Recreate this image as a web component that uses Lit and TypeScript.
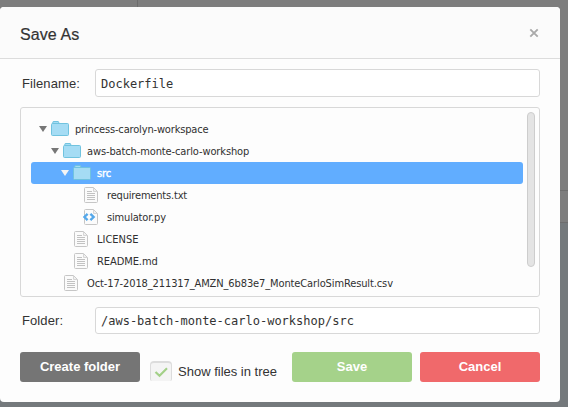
import { LitElement, html, css, svg } from "lit";
import { customElement, property } from "lit/decorators.js";

type Kind = "folder" | "text" | "code";
interface Node {
  name: string;
  kind: Kind;
  indent: number;
  spacing: number;
  selected?: boolean;
}

const NODES: Node[] = [
  { name: "princess-carolyn-workspace", kind: "folder", indent: 8, spacing: -0.16 },
  { name: "aws-batch-monte-carlo-workshop", kind: "folder", indent: 20, spacing: -0.12 },
  { name: "src", kind: "folder", indent: 30, spacing: -0.1, selected: true },
  { name: "requirements.txt", kind: "text", indent: 52, spacing: -0.18 },
  { name: "simulator.py", kind: "code", indent: 52, spacing: -0.17 },
  { name: "LICENSE", kind: "text", indent: 42, spacing: 0 },
  { name: "README.md", kind: "text", indent: 42, spacing: -0.08 },
  { name: "Oct-17-2018_211317_AMZN_6b83e7_MonteCarloSimResult.csv", kind: "text", indent: 32, spacing: -0.115 },
];

const folderIcon = html`<svg width="18" height="15" viewBox="0 0 18 15">
  <path d="M.5 13.5V3.5Q.5 2.5 1.5 2.5L2.2.5H7.3L8.2 2.5H16.5Q17.5 2.5 17.5 3.5V13.5Q17.5 14.5 16.5 14.5H1.5Q.5 14.5.5 13.5Z" fill="#a5dcf4" stroke="#70c3df"/>
  <path d="M1.5 2.5H8.5" stroke="#70c3df"/>
</svg>`;

const fileIcon = (code: boolean) => html`<svg width="18" height="16" viewBox="0 0 18 16">
  <path d="M2.5.5H10.5L14.5 4.5V14.5Q14.5 15.5 13.5 15.5H2.5Q1.5 15.5 1.5 14.5V1.5Q1.5.5 2.5.5Z" fill="#fbfbfb" stroke="#c6c6c6"/>
  <path d="M10.5 1V4.5H14" fill="#f0f0f0" stroke="#d6d6d6"/>
  ${code
    ? svg`<path d="M4.6 4.9L1.4 8L4.6 11.1M7.4 4.9L10.6 8L7.4 11.1" fill="none" stroke="#55a8ea" stroke-width="2.4"/>`
    : svg`<path d="M4 4.5H9M4 6.5H12M4 8.5H12M4 10.5H12M4 12.5H12" stroke="#c2c2c2" fill="none"/>`}
</svg>`;

@customElement("tree-row")
class TreeRow extends LitElement {
  @property({ attribute: false }) node!: Node;

  static styles = css`
    :host { display: block; }
    .row {
      box-sizing: border-box;
      height: 22px;
      display: flex;
      align-items: center;
      border-radius: 3px;
      color: #303030;
      font: 11px/22px "DejaVu Sans Condensed", "DejaVu Sans", sans-serif;
      font-stretch: condensed;
      white-space: nowrap;
    }
    .selected { background: #61adff; color: #fff; -webkit-text-stroke: 0.4px #fff; }
    .arrow { width: 8px; height: 6px; margin-right: 4px; fill: #777; }
    .selected .arrow { fill: #f4f4f4; }
    .icon { display: flex; width: 18px; flex: none; margin-right: 6px; }
    .folder { padding-bottom: 1px; }
    .label { padding-top: 1px; }
  `;

  render() {
    const n = this.node;
    const folder = n.kind === "folder";
    return html`<div class="row ${n.selected ? "selected" : ""}" style="padding-left:${n.indent}px">
      ${folder ? html`<svg class="arrow" viewBox="0 0 8 6"><path d="M0 0H8L4 6Z"/></svg>` : ""}
      <span class="icon ${folder ? "folder" : ""}">${folder ? folderIcon : fileIcon(n.kind === "code")}</span>
      <span class="label" style="letter-spacing:${n.spacing}px">${n.name}</span>
    </div>`;
  }
}

@customElement("app-root")
class AppRoot extends LitElement {
  static styles = css`
    :host {
      display: block;
      position: relative;
      width: 568px;
      height: 407px;
      overflow: hidden;
      background: linear-gradient(#7d7d7d 222px, #74797c 222px);
      font-family: "Liberation Sans", sans-serif;
      color: #333;
    }
    * { box-sizing: border-box; }
    .tick { position: absolute; left: 137px; top: 0; width: 1px; height: 7px; background: #6c6c6c; }
    .rule { position: absolute; right: 0; width: 8px; height: 1px; top: 190px; background: #6d6d6d; }
    .low { top: 222px; }
    .dialog {
      position: relative;
      top: 7px;
      width: 560px;
      height: 395px;
      border-radius: 4px;
      background: #fdfdfd;
      overflow: hidden;
    }
    .header {
      height: 52px;
      padding: 0 20px;
      display: flex;
      align-items: center;
      justify-content: space-between;
      border-bottom: 1px solid #dcdcdc;
      background: #fbfbfb;
    }
    .title { margin: 0; padding-top: 4px; font: 16px/20px "Liberation Sans", sans-serif; letter-spacing: 0.1px; -webkit-text-stroke: 0.2px #333; }
    .close { width: 10px; height: 10px; margin: 1px 1px 0 0; }
    .body { padding: 10px 20px 0; }
    .field { display: flex; align-items: center; height: 28px; }
    .field.folder { height: 27px; }
    .field label { width: 75px; padding-left: 2px; font-size: 13px; letter-spacing: 0.1px; }
    .input {
      flex: 1;
      height: 100%;
      padding: 1px 5px 0;
      display: flex;
      align-items: center;
      border: 1px solid #d8d8d8;
      border-radius: 3px;
      background: #fff;
      font: 12px "DejaVu Sans Mono", monospace;
    }
    .tree {
      display: flex;
      justify-content: space-between;
      height: 190px;
      margin: 10px 0;
      padding: 4px 4px 0 10px;
      border: 1px solid #d8d8d8;
      border-radius: 3px;
    }
    .rows { width: 492px; padding-top: 6px; }
    .thumb { width: 8px; height: 155px; border: 1px solid #cdcdcd; border-radius: 4px; background: #e4e4e4; }
    .actions { display: flex; align-items: flex-start; margin-top: 18px; }
    .btn {
      width: 120px;
      height: 30px;
      padding: 0 0 1px;
      border: 0;
      border-radius: 3px;
      color: #fff;
      font: bold 13px/29px "Liberation Sans", sans-serif;
      text-align: center;
    }
    .create { background: #757575; }
    .save { background: #a5d28a; }
    .cancel { background: #f0696b; margin-left: 8px; }
    .check {
      width: 142px;
      margin: 9px 0 0 10px;
      display: flex;
      gap: 6px;
      font-size: 13px;
      line-height: 21px;
      white-space: nowrap;
    }
    .box {
      width: 22px;
      height: 20px;
      flex: none;
      border: 1px solid #dcdcdc;
      border-width: 2px 1px 0;
      border-radius: 4px 4px 2px 2px;
      background: #f4f4f4;
    }
    .box svg { display: block; }
  `;

  render() {
    return html`
      <div class="tick"></div>
      <div class="rule"></div>
      <div class="rule low"></div>
      <div class="dialog">
        <div class="header">
          <h1 class="title">Save As</h1>
          <svg class="close" viewBox="0 0 10 10"><path d="M1.3 1.3L8.7 8.7M8.7 1.3L1.3 8.7" stroke="#aaa" stroke-width="1.9"/></svg>
        </div>
        <div class="body">
          <div class="field"><label>Filename:</label><div class="input">Dockerfile</div></div>
          <div class="tree">
            <div class="rows">${NODES.map((n) => html`<tree-row .node=${n}></tree-row>`)}</div>
            <div class="thumb"></div>
          </div>
          <div class="field folder"><label>Folder:</label><div class="input">/aws-batch-monte-carlo-workshop/src</div></div>
          <div class="actions">
            <button class="btn create">Create folder</button>
            <div class="check">
              <span class="box"><svg width="20" height="18" viewBox="0 0 20 18"><path d="M4.5 9L8.5 12.7L16 5.2" fill="none" stroke="#a3d088" stroke-width="2.2"/></svg></span>
              <span>Show files in tree</span>
            </div>
            <button class="btn save">Save</button>
            <button class="btn cancel">Cancel</button>
          </div>
        </div>
      </div>
    `;
  }
}
